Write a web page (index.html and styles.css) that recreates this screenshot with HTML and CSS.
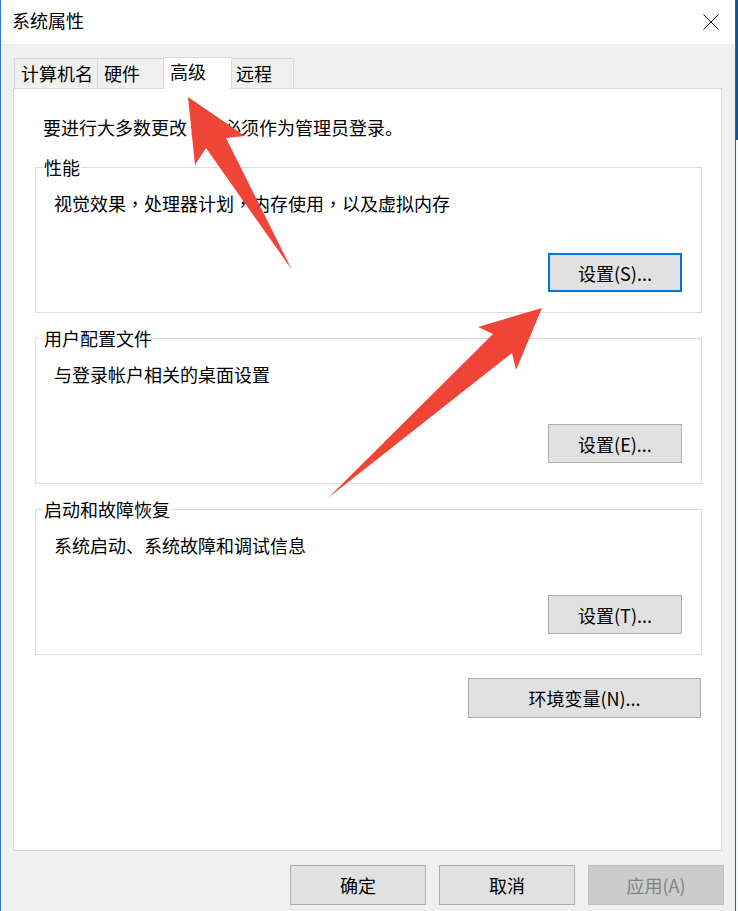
FILE: index.html
```html
<!DOCTYPE html>
<html lang="zh-CN">
<head>
<meta charset="utf-8">
<title>系统属性</title>
<link rel="stylesheet" href="styles.css">
</head>
<body>
<div class="screen">
  <div class="window">
    <div class="titlebar">
      <span class="title">系统属性</span>
      <span class="close">
        <svg width="16" height="16" viewBox="0 0 16 16"><path d="M0.5 0.5 L15.5 15.5 M15.5 0.5 L0.5 15.5" stroke="#000" stroke-width="1" fill="none"/></svg>
      </span>
    </div>
    <div class="client">
      <div class="tabs">
        <div class="tab tab-name">计算机名</div>
        <div class="tab tab-hw">硬件</div>
        <div class="tab tab-active">高级</div>
        <div class="tab tab-remote">远程</div>
      </div>
      <div class="panel">
        <p class="intro">要进行大多数更改<span class="punct" lang="zh-TW">，</span>你必须作为管理员登录。</p>
        <section class="group group-first">
          <h3 class="group-title">性能</h3>
          <p class="group-desc">视觉效果<span class="punct" lang="zh-TW">，</span>处理器计划<span class="punct" lang="zh-TW">，</span>内存使用<span class="punct" lang="zh-TW">，</span>以及虚拟内存</p>
          <button class="btn btn-set btn-default">设置(S)...</button>
        </section>
        <section class="group">
          <h3 class="group-title">用户配置文件</h3>
          <p class="group-desc">与登录帐户相关的桌面设置</p>
          <button class="btn btn-set">设置(E)...</button>
        </section>
        <section class="group">
          <h3 class="group-title">启动和故障恢复</h3>
          <p class="group-desc">系统启动、系统故障和调试信息</p>
          <button class="btn btn-set">设置(T)...</button>
        </section>
        <button class="btn btn-env">环境变量(N)...</button>
      </div>
      <div class="footer">
        <button class="btn btn-foot">确定</button>
        <button class="btn btn-foot">取消</button>
        <button class="btn btn-foot btn-disabled">应用(A)</button>
      </div>
    </div>
    <svg class="arrows" width="738" height="911" viewBox="0 0 738 911">
      <polygon points="188,97 245,136 226,138 292,270 206,148 195,165" fill="#f04437"/>
      <polygon points="542,308 478,327 493,334 328,498 512,353 516,370" fill="#f04437"/>
    </svg>
  </div>
  <div class="edge"></div>
</div>
</body>
</html>
```

FILE: styles.css
```css
* {
  box-sizing: border-box;
}

html,
body {
  margin: 0;
  padding: 0;
}

body {
  width: 738px;
  height: 911px;
  overflow: hidden;
  background: #ffffff;
  font-family: "Noto Sans CJK SC", "Microsoft YaHei", sans-serif;
  font-size: 18px;
  line-height: 20px;
  color: #000000;
}

.punct {
  font-family: "Noto Sans CJK TC", "Noto Sans CJK SC", sans-serif;
}

.screen {
  display: flex;
  height: 911px;
}

.window {
  position: relative;
  width: 736px;
  height: 911px;
  flex: none;
  border-left: 1px solid #2b7bd0;
  border-right: 1px solid #1f64b5;
  display: flex;
  flex-direction: column;
}

.edge {
  width: 2px;
  height: 911px;
  flex: none;
  background: linear-gradient(#1b4e8c 0, #1b4e8c 140px, #f4f7fb 140px, #f4f7fb 100%);
}

/* title bar */
.titlebar {
  height: 44px;
  flex: none;
  background: #ffffff;
  display: flex;
  justify-content: space-between;
  align-items: flex-start;
}

.title {
  margin: 10px 0 0 11px;
}

.close {
  display: flex;
  margin: 14px 16px 0 0;
}

/* client area */
.client {
  flex: 1;
  background: #f0f0f0;
  padding: 0 13px 0 12px;
}

.tabs {
  display: flex;
  align-items: flex-end;
  height: 31px;
  margin-top: 13px;
  padding-left: 1px;
}

.tab {
  height: 30px;
  line-height: 28px;
  padding-left: 6px;
  border-top: 1px solid #d9d9d9;
  background: #f0f0f0;
  white-space: nowrap;
}

.tab-name {
  width: 83px;
  border-left: 1px solid #d9d9d9;
}

.tab-hw {
  width: 66px;
  border-left: 1px solid #d9d9d9;
}

.tab-active {
  position: relative;
  z-index: 1;
  width: 69px;
  height: 32px;
  line-height: 26px;
  margin-bottom: -1px;
  background: #ffffff;
  border-left: 1px solid #d9d9d9;
  border-right: 1px solid #d9d9d9;
}

.tab-remote {
  width: 62px;
  padding-left: 4px;
  border-right: 1px solid #d9d9d9;
}

.panel {
  height: 763px;
  background: #ffffff;
  border: 1px solid #d9d9d9;
  padding: 28px 19px 0 21px;
  display: flex;
  flex-direction: column;
}

.intro {
  margin: 0 0 0 8px;
}

.group {
  height: 146px;
  flex: none;
  margin-top: 25px;
  border: 1px solid #dcdcdc;
  padding-bottom: 20px;
  display: flex;
  flex-direction: column;
}

.group-first {
  margin-top: 30px;
}

.group-title {
  align-self: flex-start;
  margin: -11px 0 0 7px;
  padding: 0 1px;
  background: #ffffff;
  font-size: 18px;
  font-weight: normal;
  line-height: 20px;
}

.group-desc {
  margin: 16px 0 0 0;
  padding-left: 18px;
}

/* buttons */
.btn {
  font-family: inherit;
  font-size: 18px;
  line-height: 20px;
  color: #000000;
  background: #e1e1e1;
  border: 1px solid #adadad;
  padding: 0;
  margin: 0;
  text-align: center;
}

.btn-set {
  align-self: flex-end;
  width: 134px;
  height: 39px;
  margin: 40px 19px 0 0;
}

.btn-default {
  border: 2px solid #0078d7;
}

.btn-env {
  align-self: flex-end;
  width: 233px;
  height: 40px;
  margin: 23px 1px 0 0;
}

.footer {
  display: flex;
  justify-content: flex-end;
  gap: 13px;
  margin: 14px -2px 0 0;
}

.btn-foot {
  width: 136px;
  height: 40px;
}

.btn-disabled {
  background: #cccccc;
  border-color: #bfbfbf;
  color: #838383;
}

.arrows {
  position: absolute;
  left: -1px;
  top: 0;
  pointer-events: none;
}
```
